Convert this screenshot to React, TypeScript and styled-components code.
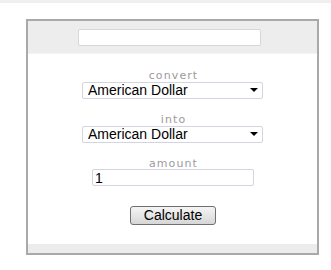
import React, { useState } from "react";
import styled, { createGlobalStyle } from "styled-components";

const GlobalStyle = createGlobalStyle`
  html, body {
    margin: 0;
    padding: 0;
    background: #ffffff;
  }
  body {
    font-family: "Liberation Sans", Arial, sans-serif;
  }
`;

const Page = styled.div`
  width: 331px;
  height: 270px;
  overflow: hidden;
  background: #ffffff;
`;

const TopStrip = styled.div`
  height: 3px;
  background: #efefef;
  margin-bottom: 16px;
`;

const Panel = styled.div`
  margin-left: 26px;
  width: 289px;
  border: 2px solid #a9a9a9;
  background: #ffffff;
`;

const Header = styled.div`
  height: 33px;
  background: #ededed;
  border-bottom: 1px dotted #fafafa;
  padding: 8px 0 0 50px;
  box-sizing: border-box;
`;

const TitleInput = styled.input`
  display: block;
  width: 183px;
  height: 17px;
  box-sizing: border-box;
  border: 1px solid #d6d6de;
  border-radius: 2px;
  background: #ffffff;
  padding: 0 3px;
  outline: none;
`;

const Body = styled.div`
  display: flex;
  flex-direction: column;
  align-items: center;
  padding: 14px 0 19px;
`;

const Label = styled.div<{ $first?: boolean }>`
  font-family: "DejaVu Sans", Verdana, sans-serif;
  font-size: 11px;
  line-height: 10px;
  height: 13px;
  padding-top: 3px;
  box-sizing: border-box;
  letter-spacing: 1.1px;
  color: #a09a9c;
  margin-top: ${({ $first }) => ($first ? "0" : "14px")};
  margin-left: 2px;
`;

const SelectWrap = styled.div`
  position: relative;
  width: 181px;
  height: 17px;

  &::after {
    content: "";
    position: absolute;
    right: 5px;
    top: 7px;
    border-left: 4px solid transparent;
    border-right: 4px solid transparent;
    border-top: 4px solid #000000;
    pointer-events: none;
  }
`;

const Select = styled.select`
  appearance: none;
  -webkit-appearance: none;
  width: 100%;
  height: 100%;
  box-sizing: border-box;
  border: 1px solid #d4d4e0;
  border-radius: 2px;
  background: #ffffff;
  font-family: "Liberation Sans", Arial, sans-serif;
  font-size: 14px;
  line-height: 15px;
  color: #000000;
  padding: 0 0 0 5px;
  outline: none;
`;

const AmountInput = styled.input`
  display: block;
  width: 162px;
  height: 17px;
  box-sizing: border-box;
  border: 1px solid #d4d4e0;
  border-radius: 2px;
  font-family: "Liberation Sans", Arial, sans-serif;
  font-size: 14px;
  color: #000000;
  padding: 0 2px;
  margin-left: 1px;
  outline: none;
`;

const Button = styled.button`
  margin-top: 20px;
  margin-left: 1px;
  width: 86px;
  height: 19px;
  box-sizing: border-box;
  border: 1px solid #707070;
  border-radius: 3px;
  background: linear-gradient(#f4f4f4, #e6e6e6 50%, #d6d6d6);
  font-family: "Liberation Sans", Arial, sans-serif;
  font-size: 14px;
  line-height: 15px;
  color: #000000;
  padding: 0;
`;

const Footer = styled.div`
  height: 9px;
  background: #ececec;
`;

const currencies = ["American Dollar", "Euro", "British Pound", "Japanese Yen"];

export default function App() {
  const [from, setFrom] = useState(currencies[0]);
  const [to, setTo] = useState(currencies[0]);
  const [amount, setAmount] = useState("1");

  return (
    <Page>
      <GlobalStyle />
      <TopStrip />
      <Panel>
        <Header>
          <TitleInput type="text" />
        </Header>
        <Body>
          <Label $first>convert</Label>
          <SelectWrap>
            <Select value={from} onChange={(e) => setFrom(e.target.value)}>
              {currencies.map((c) => (
                <option key={c}>{c}</option>
              ))}
            </Select>
          </SelectWrap>
          <Label>into</Label>
          <SelectWrap>
            <Select value={to} onChange={(e) => setTo(e.target.value)}>
              {currencies.map((c) => (
                <option key={c}>{c}</option>
              ))}
            </Select>
          </SelectWrap>
          <Label>amount</Label>
          <AmountInput
            type="text"
            value={amount}
            onChange={(e) => setAmount(e.target.value)}
          />
          <Button type="button">Calculate</Button>
        </Body>
        <Footer />
      </Panel>
    </Page>
  );
}
